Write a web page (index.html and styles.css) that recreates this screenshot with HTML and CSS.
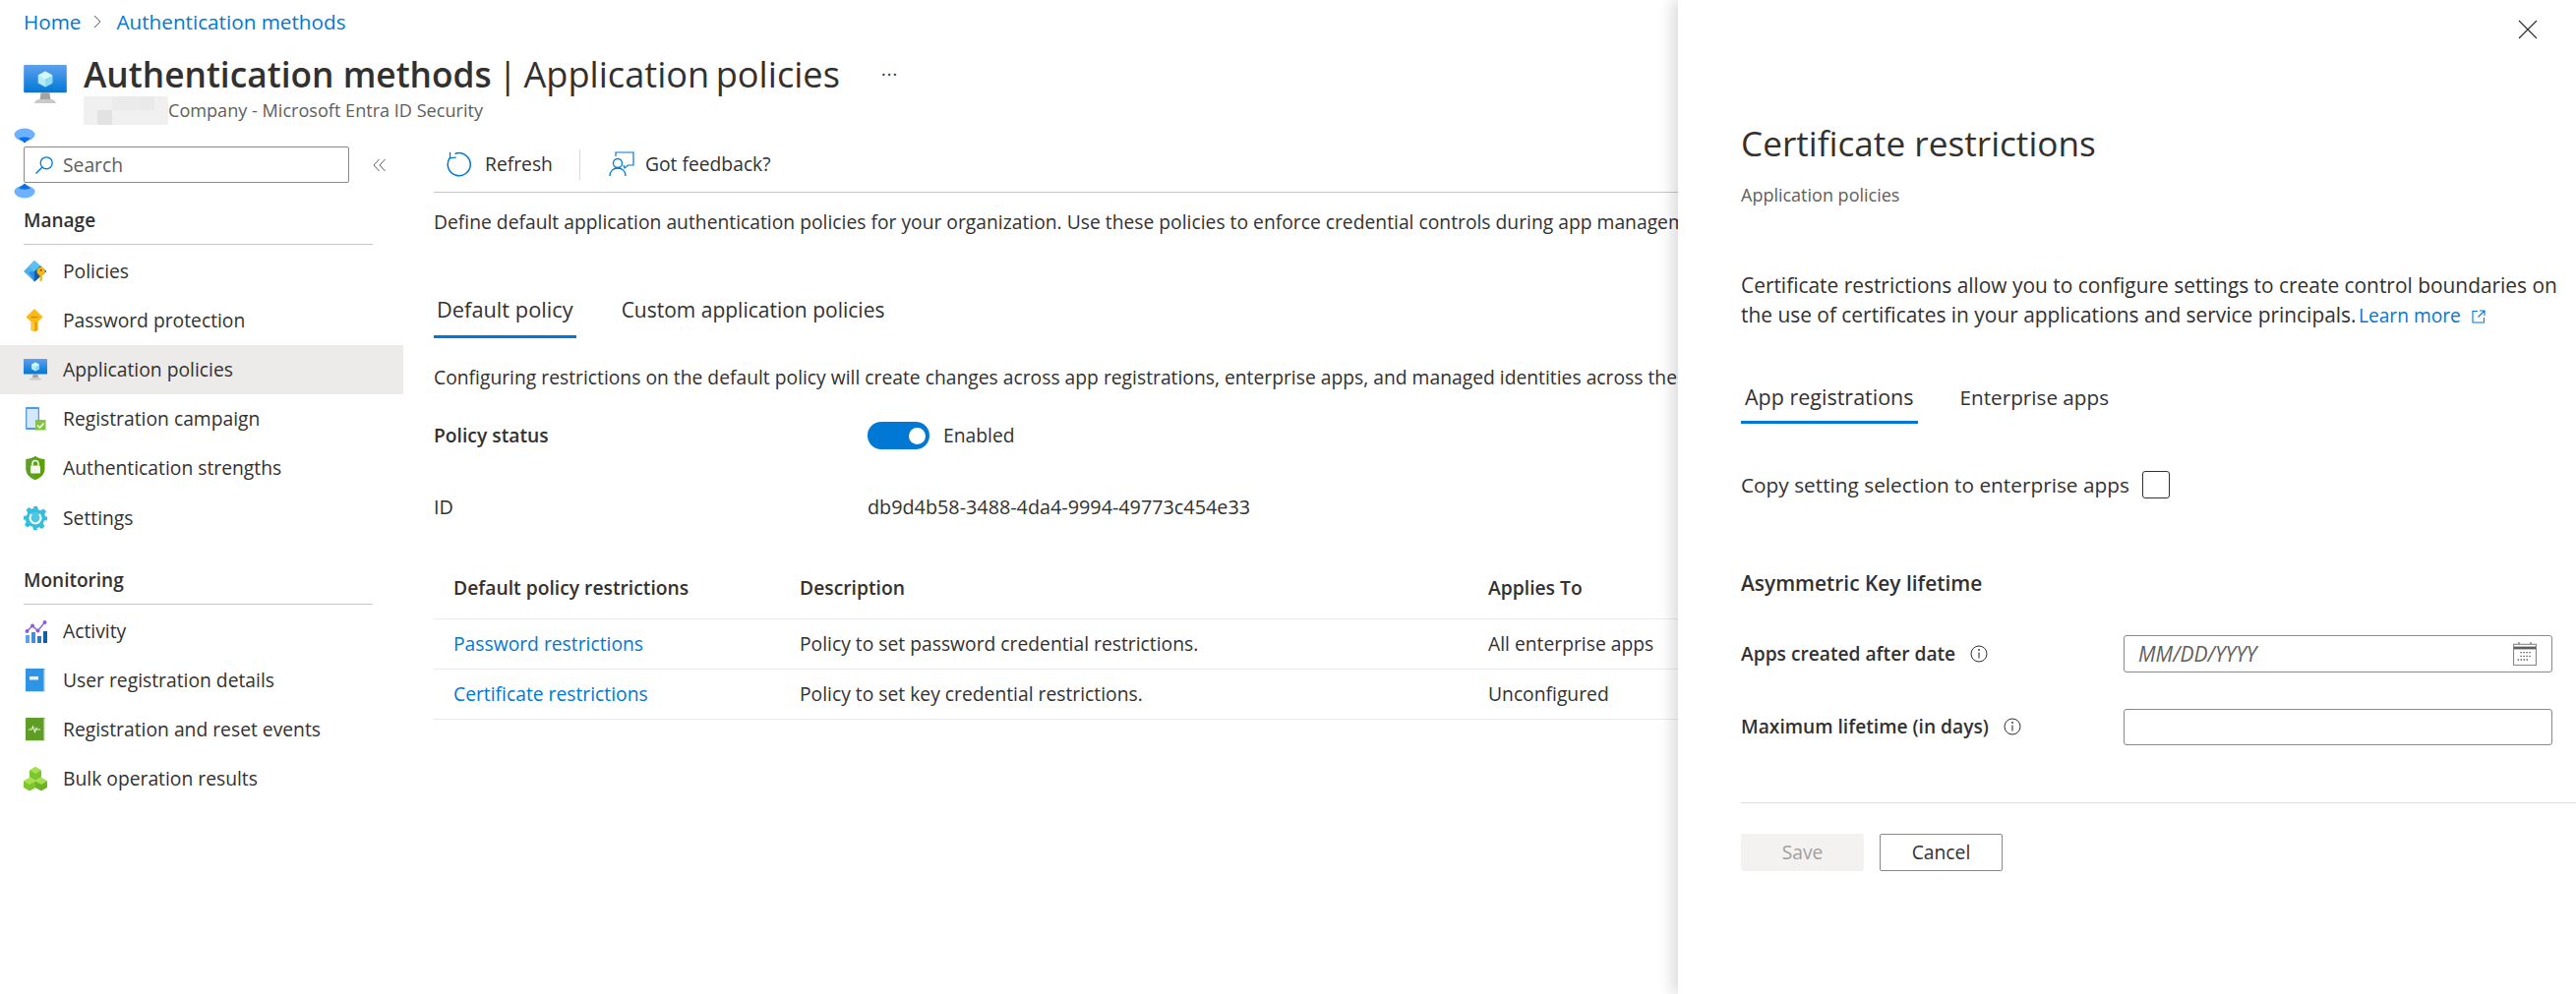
FILE: index.html
```html
<!DOCTYPE html>
<html lang="en">
<head>
<meta charset="UTF-8">
<meta name="viewport" content="width=device-width, initial-scale=1.0">
<title>Authentication methods | Application policies</title>
<link rel="stylesheet" href="styles.css">
</head>
<body>
<svg class="sprite" width="0" height="0">
    <defs>
        <linearGradient id="screenBlue" x1="0" y1="0" x2="0" y2="1">
            <stop offset="0" stop-color="#5ea0ef"/>
            <stop offset="1" stop-color="#0078d4"/>
        </linearGradient>
        <symbol id="monitor" viewBox="0 0 24 22">
            <rect x="0" y="0" width="24" height="15.6" rx="0.6" fill="url(#screenBlue)"/>
            <path d="M9.6 15.6h4.8l.6 3.6H9z" fill="#a3a3a3"/>
            <path d="M6 21.4c0-1.3 1.6-2.2 3-2.2h6c1.4 0 3 .9 3 2.2z" fill="#c9c9c9"/>
            <path d="M12 3.6l4 2.2v4.4l-4 2.2-4-2.2V5.8z" fill="#b5ecf8"/>
            <path d="M12 8l4-2.2v4.4l-4 2.2z" fill="#8fdcf2"/>
            <path d="M12 3.6l4 2.2L12 8 8 5.8z" fill="#d9f6fc"/>
        </symbol>
    </defs>
</svg>

<header class="page-head">
    <nav class="crumbs">
        <a href="#">Home</a>
        <svg class="crumb-sep" viewBox="0 0 10 16"><path d="M2 2l6 6-6 6" fill="none" stroke="#605e5c" stroke-width="1"/></svg>
        <a href="#">Authentication methods</a>
    </nav>
    <div class="title-row">
        <svg class="title-icon"><use href="#monitor"/></svg>
        <div>
            <div class="title-line">
                <h1><b>Authentication methods</b><span class="title-rest"> | Application policies</span></h1>
                <span class="more">&middot;&middot;&middot;</span>
            </div>
            <div class="subtitle">
                <div class="blur">
                    <i></i><i></i><i></i><i></i><i></i><i></i>
                    <i></i><i></i><i></i><i></i><i></i><i></i>
                </div>
                <span>Company - Microsoft Entra ID Security</span>
            </div>
        </div>
    </div>
</header>

<div class="layout">
    <aside class="sidebar">
        <div class="search-row">
            <div class="search">
                <svg class="search-icon" viewBox="0 0 20 20"><circle cx="12.200" cy="7.800" r="6" fill="none" stroke="#0078d4" stroke-width="1.300"/><path d="M8 12L1.500 18.500" stroke="#0078d4" stroke-width="1.500"/></svg>
                <span>Search</span>
            </div>
            <svg class="collapse" viewBox="0 0 14 14"><path d="M6.500 1L1 7l5.500 6M12.500 1L7 7l5.500 6" fill="none" stroke="#605e5c" stroke-width="1"/></svg>
        </div>
        <svg class="handle handle-top" viewBox="0 0 22 16"><ellipse cx="11" cy="7" rx="10.500" ry="6.500" fill="#6cb2ff"/><path d="M5 10.500C8 9 14 9 17 10.500L11 15.500z" fill="#0a6fe8"/></svg>
        <svg class="handle handle-bottom" viewBox="0 0 22 16"><ellipse cx="11" cy="9" rx="10.500" ry="6.500" fill="#6cb2ff"/><path d="M5 5.500C8 7 14 7 17 5.500L11 .5z" fill="#0a6fe8"/></svg>

        <h4 class="nav-head">Manage</h4>
        <ul class="nav">
            <li>
                <svg class="nav-icon" viewBox="0 0 24 24"><path d="M11 1L0 12l11 10.500L23.300 12z" fill="#50b0ee"/><path d="M11 1L5 7l6 5 6-5.500z" fill="#5cc0f5"/><path d="M5 12.500l6-.5 6 4-6 6.500z" fill="#2f8fe0"/><path d="M11 22.500L23.300 12 17 6.500 11 12z" fill="#1b5aa6"/><circle cx="17.700" cy="12" r="4.200" fill="#f5b716"/><path d="M16.500 15h2.400v6l-1.200 1.800-1.200-1.300z" fill="#f5b716"/><circle cx="17.700" cy="10.800" r="1.100" fill="#8a5a00"/></svg>
                <span>Policies</span>
            </li>
            <li>
                <svg class="nav-icon" viewBox="0 0 24 24"><path d="M11 .8L18.700 8.500 14 12.800V21.500Q11 23.500 8 21.500V12.800L3.300 8.500z" fill="#fdb913" stroke="#fdb913" stroke-width="1.200" stroke-linejoin="round"/><path d="M7.500 8h7v1.200h-7z" fill="#c98a00"/><path d="M11 14v9q-1.800 0-3-1.500V13z" fill="#fcc83a"/><path d="M11 14v9q1.800 0 3-1.500V13z" fill="#f59f00"/></svg>
                <span>Password protection</span>
            </li>
            <li class="active">
                <svg class="nav-icon"><use href="#monitor"/></svg>
                <span>Application policies</span>
            </li>
            <li>
                <svg class="nav-icon" viewBox="0 0 24 24"><rect x="2" y="0" width="14" height="23" rx="1.200" fill="#4f9be8"/><rect x="3.300" y="2" width="11.400" height="19" fill="#d3e9fb"/><rect x="12" y="13" width="10.500" height="10.500" fill="#86c440"/><path d="M14 18.500l2.500 2.500 4-4.500" fill="none" stroke="#fff" stroke-width="1.500"/></svg>
                <span>Registration campaign</span>
            </li>
            <li>
                <svg class="nav-icon" viewBox="0 0 24 24"><path d="M12 0c3 2 6 3 9.500 3v10c0 5-4 9-9.500 11C6.500 22 2.500 18 2.500 13V3C6 3 9 2 12 0z" fill="#57a300"/><path d="M12 0v24C6.500 22 2.500 18 2.500 13V3C6 3 9 2 12 0z" fill="#5f9e2a"/><rect x="7" y="9.500" width="10" height="8" rx="1" fill="#f2f7e9"/><path d="M9 9.500V7.500a3 3 0 0 1 6 0v2" fill="none" stroke="#f2f7e9" stroke-width="1.600"/></svg>
                <span>Authentication strengths</span>
            </li>
            <li>
                <svg class="nav-icon" viewBox="0 0 24 24"><path d="M10 0h4l.8 3.200 2.600 1 2.800-1.700 2.800 2.800-1.700 2.800 1 2.600L24 10v4l-3.200.8-1 2.600 1.700 2.800-2.800 2.800-2.800-1.700-2.600 1L14 24h-4l-.8-3.200-2.600-1-2.800 1.700L1 18.700l1.700-2.800-1-2.600L0 14v-4l3.200-.8 1-2.600L2.500 3.800l2.800-2.800L8 2.800l2.600-1z" fill="#32bedd"/><circle cx="12" cy="12" r="6.500" fill="#fff" opacity=".15"/><path d="M8 8a5.500 5.500 0 1 0 8 0" fill="none" stroke="#fff" stroke-width="2"/></svg>
                <span>Settings</span>
            </li>
        </ul>

        <h4 class="nav-head nav-head-second">Monitoring</h4>
        <ul class="nav nav-second">
            <li>
                <svg class="nav-icon" viewBox="0 0 24 24"><rect x="2" y="16" width="4" height="8" fill="#5ea0ef"/><rect x="8" y="13" width="4" height="11" fill="#3f8fdb"/><rect x="14" y="17" width="4" height="7" fill="#2a7cc9"/><rect x="20" y="12" width="4" height="12" fill="#0f5fa8"/><path d="M3.500 12L9 6.500l5.500 5L21.500 3" fill="none" stroke="#8c5be0" stroke-width="1.300"/><circle cx="3.500" cy="12" r="2" fill="#8c5be0"/><circle cx="9" cy="6.500" r="2" fill="#8c5be0"/><circle cx="14.500" cy="11.500" r="2" fill="#8c5be0"/><circle cx="21.500" cy="3" r="2" fill="#8c5be0"/></svg>
                <span>Activity</span>
            </li>
            <li>
                <svg class="nav-icon" viewBox="0 0 24 24"><rect x="2" y="0" width="20" height="24" rx=".8" fill="#2f94e5"/><path d="M20.500 0.500v22.500H2v1h20V.5z" fill="#cde4f7"/><rect x="6" y="8" width="9" height="3.500" fill="#e4f1fb"/></svg>
                <span>User registration details</span>
            </li>
            <li>
                <svg class="nav-icon" viewBox="0 0 24 24"><rect x="2" y="0" width="20" height="24" rx=".8" fill="#5e9e27"/><path d="M20.500 .5v22.500H2v1h20V.5z" fill="#d9ead0"/><path d="M5 12h3l1.500-3 2 5.500 1.500-4 1 1.500h3" fill="none" stroke="#e7f3da" stroke-width="1.100"/></svg>
                <span>Registration and reset events</span>
            </li>
            <li>
                <svg class="nav-icon" viewBox="0 0 24 24"><path d="M12 0l6 3.400v7L12 14l-6-3.600v-7z" fill="#7cc62d"/><path d="M12 0l6 3.400L12 7 6 3.400z" fill="#a5e04f"/><path d="M6 11l6 3.500v6.800L6 24.500 0 21v-6.500z" fill="#7cc62d"/><path d="M6 11l6 3.500L6 18 0 14.500z" fill="#a5e04f"/><path d="M18 11l6 3.500V21l-6 3.500-6-3.200v-6.800z" fill="#6cb423"/><path d="M18 11l6 3.500-6 3.500-6-3.500z" fill="#a5e04f"/></svg>
                <span>Bulk operation results</span>
            </li>
        </ul>
    </aside>

    <main class="main">
        <div class="toolbar">
            <button class="tool">
                <svg class="tool-icon" viewBox="0 0 26 26"><path d="M8.500 2.500A11.500 11.500 0 1 1 3.400 6.500" fill="none" stroke="#0078d4" stroke-width="1.500"/><path d="M3.500 .8l.2 6 6-.6" fill="none" stroke="#0078d4" stroke-width="1.300"/></svg>
                <span>Refresh</span>
            </button>
            <div class="tool-sep"></div>
            <button class="tool">
                <svg class="tool-icon feedback-icon" viewBox="0 0 26 26"><path d="M7 5V1h18v13h-5.500l-3.500 3-1-3" fill="none" stroke="#0078d4" stroke-width="1.200"/><circle cx="9" cy="12" r="4.500" fill="none" stroke="#0078d4" stroke-width="1.300"/><path d="M1 25c0-5 3.500-8 8-8s8 3 8 8" fill="none" stroke="#0078d4" stroke-width="1.300"/></svg>
                <span>Got feedback?</span>
            </button>
        </div>

        <p class="intro">Define default application authentication policies for your organization. Use these policies to enforce credential controls during app management.</p>

        <div class="tabs main-tabs">
            <div class="tab selected">Default policy</div>
            <div class="tab">Custom application policies</div>
        </div>

        <p class="note">Configuring restrictions on the default policy will create changes across app registrations, enterprise apps, and managed identities across the organization.</p>

        <div class="field policy-status">
            <label>Policy status</label>
            <div class="toggle-wrap">
                <div class="toggle"></div>
                <span>Enabled</span>
            </div>
        </div>
        <div class="field policy-id">
            <label>ID</label>
            <span>db9d4b58-3488-4da4-9994-49773c454e33</span>
        </div>

        <table class="restrictions">
            <thead>
                <tr>
                    <th class="col-name">Default policy restrictions</th>
                    <th class="col-desc">Description</th>
                    <th>Applies To</th>
                </tr>
            </thead>
            <tbody>
                <tr>
                    <td><a href="#">Password restrictions</a></td>
                    <td>Policy to set password credential restrictions.</td>
                    <td>All enterprise apps</td>
                </tr>
                <tr>
                    <td><a href="#">Certificate restrictions</a></td>
                    <td>Policy to set key credential restrictions.</td>
                    <td>Unconfigured</td>
                </tr>
            </tbody>
        </table>
    </main>
</div>

<section class="panel">
    <svg class="close" viewBox="0 0 20 20"><path d="M1 1l18 18M19 1L1 19" stroke="#323130" stroke-width="1.200"/></svg>
    <h2 class="panel-title">Certificate restrictions</h2>
    <div class="panel-sub">Application policies</div>
    <p class="panel-text">Certificate restrictions allow you to configure settings to create control boundaries on<br>the use of certificates in your applications and service principals. <a href="#">Learn more <svg class="ext" viewBox="0 0 14 14"><path d="M6 1.500H1v11.500h11.500V8M8 1h5v5M13 1L6.500 7.500" fill="none" stroke="#0078d4" stroke-width="1.100"/></svg></a></p>

    <div class="tabs panel-tabs">
        <div class="tab selected">App registrations</div>
        <div class="tab">Enterprise apps</div>
    </div>

    <div class="copy-row">
        <span>Copy setting selection to enterprise apps</span>
        <div class="checkbox"></div>
    </div>

    <h3 class="section-head">Asymmetric Key lifetime</h3>

    <div class="form-row first-row">
        <label>Apps created after date <svg class="info" viewBox="0 0 18 18"><circle cx="9" cy="9" r="8" fill="none" stroke="#323130" stroke-width="1"/><path d="M9 7.500V13.500" stroke="#323130" stroke-width="1.100"/><circle cx="9" cy="5" r=".9" fill="#323130"/></svg></label>
        <div class="input">
            <span class="placeholder">MM/DD/YYYY</span>
            <svg class="calendar" viewBox="0 0 26 26"><path d="M6.500 0v4M19.500 0v4" stroke="#605e5c" stroke-width="1.200"/><rect x=".6" y="2.500" width="24.800" height="23" fill="#fff" stroke="#8a8886" stroke-width="1.200"/><path d="M1 6.500h24" stroke="#605e5c" stroke-width="3"/><path d="M8 11.500h12M8 15.500h12M5 19.500h12" stroke="#605e5c" stroke-width="1.400" stroke-dasharray="1.600 1.600"/></svg>
        </div>
    </div>
    <div class="form-row second-row">
        <label>Maximum lifetime (in days) <svg class="info" viewBox="0 0 18 18"><circle cx="9" cy="9" r="8" fill="none" stroke="#323130" stroke-width="1"/><path d="M9 7.500V13.500" stroke="#323130" stroke-width="1.100"/><circle cx="9" cy="5" r=".9" fill="#323130"/></svg></label>
        <div class="input"></div>
    </div>

    <div class="panel-rule"></div>
    <div class="panel-actions">
        <button class="btn btn-save">Save</button>
        <button class="btn btn-cancel">Cancel</button>
    </div>
</section>
</body>
</html>
```

FILE: styles.css
```css
html, body {
    height: 100%;
}
body {
    margin: 0;
    overflow: hidden;
    position: relative;
    background: #fff;
    color: #323130;
    font-family: "Open Sans", "Noto Sans", Arial, sans-serif;
    font-size: 19.300px;
    line-height: 26px;
}
a {
    color: #0078d4;
    text-decoration: none;
}
p, h1, h2, h3, h4, ul {
    margin: 0;
    padding: 0;
}
.sprite {
    position: absolute;
}

/* header */
.page-head {
    padding-left: 24px;
}
.crumbs {
    display: flex;
    align-items: center;
    height: 44px;
    font-size: 20.700px;
}
.crumb-sep {
    width: 10px;
    height: 16px;
    margin: 0 14px 0 12px;
}
.title-row {
    display: flex;
    margin-top: 8px;
}
.title-icon {
    width: 44px;
    height: 40px;
    margin: 14px 17px 0 0;
}
.title-line {
    display: flex;
    align-items: center;
    height: 46px;
}
h1 {
    font-size: 35.300px;
    font-weight: 400;
    line-height: 46px;
    white-space: nowrap;
}
h1 b {
    font-weight: 600;
}
.title-rest {
    font-size: 36.200px;
    word-spacing: -3px;
}
.more {
    margin-left: 42px;
    font-size: 18px;
    letter-spacing: 1px;
    color: #323130;
}
.subtitle {
    display: flex;
    align-items: center;
    height: 28px;
    font-size: 18.100px;
    color: #605e5c;
}
.blur {
    display: grid;
    grid-template-columns: repeat(6, 1fr);
    width: 86px;
    height: 29px;
}
.blur i {
    background: #f0f0f0;
}
.blur i:nth-child(3), .blur i:nth-child(4) {
    background: #ebebeb;
}
.blur i:nth-child(5) {
    background: #e9e9e9;
}
.blur i:nth-child(8) {
    background: #e2e2e2;
}

/* sidebar */
.layout {
    display: flex;
}
.sidebar {
    position: relative;
    flex: 0 0 410px;
    padding-top: 23px;
}
.search-row {
    display: flex;
    align-items: center;
    padding-left: 24px;
}
.search {
    display: flex;
    align-items: center;
    box-sizing: border-box;
    width: 331px;
    height: 37px;
    padding-left: 10px;
    border: 1px solid #8a8886;
    border-radius: 2px;
    color: #605e5c;
}
.search-icon {
    width: 20px;
    height: 20px;
    margin-right: 9px;
}
.collapse {
    width: 14px;
    height: 14px;
    margin-left: 24px;
}
.handle {
    position: absolute;
    left: 14px;
    width: 22px;
    height: 16px;
}
.handle-top {
    top: 4px;
}
.handle-bottom {
    top: 60px;
}
.nav-head {
    box-sizing: content-box;
    width: 355px;
    margin: 26px 0 0 24px;
    padding-bottom: 12px;
    border-bottom: 1px solid #c8c6c4;
    font-size: 19px;
    line-height: 24px;
    font-weight: 600;
}
.nav {
    margin-top: 2px;
    list-style-type: none;
}
.nav li {
    display: flex;
    align-items: center;
    height: 50.100px;
    padding-left: 24px;
}
.nav li.active {
    background: #edebe9;
}
.nav-icon {
    flex: none;
    width: 24px;
    height: 24px;
    margin-right: 16px;
}

/* main */
.main {
    flex: 1;
    min-width: 0;
    padding: 0 0 0 31px;
}
.toolbar {
    display: flex;
    align-items: center;
    height: 34px;
    padding: 24px 0 11px 13px;
    border-bottom: 1px solid #c8c6c4;
}
.tool {
    display: flex;
    align-items: center;
    padding: 0;
    border: none;
    background: none;
    color: #323130;
    font: inherit;
    cursor: pointer;
}
.tool-icon {
    width: 26px;
    height: 26px;
    margin-right: 13px;
}
.feedback-icon {
    margin-right: 11px;
}
.tool-sep {
    width: 1px;
    height: 31px;
    margin: 0 29px 0 27px;
    background: #dadada;
}
.intro {
    margin-top: 17px;
    white-space: nowrap;
}
.tabs {
    display: flex;
}
.tab {
    box-sizing: border-box;
    padding: 0 3px 13px;
    border-bottom: 3px solid transparent;
    white-space: nowrap;
}
.tab.selected {
    border-bottom-color: #0078d4;
    font-weight: 500;
}
.main-tabs {
    margin-top: 63px;
    gap: 43px;
    font-size: 21px;
}
.main-tabs .selected {
    font-size: 21.800px;
}
.note {
    margin-top: 27px;
    white-space: nowrap;
}
.field {
    display: flex;
    align-items: center;
}
.field label {
    flex: 0 0 441px;
}
.policy-status {
    height: 28px;
    margin-top: 32px;
}
.policy-status label {
    font-weight: 600;
}
.policy-id {
    margin-top: 46px;
    font-size: 19.800px;
}
.toggle-wrap {
    display: flex;
    align-items: center;
    gap: 14px;
}
.toggle {
    position: relative;
    width: 63px;
    height: 28px;
    border-radius: 14px;
    background: #0078d4;
}
.toggle::after {
    content: "";
    position: absolute;
    top: 6px;
    right: 4px;
    width: 17px;
    height: 17px;
    border-radius: 50%;
    background: #fff;
}
.restrictions {
    width: 100%;
    margin-top: 50px;
    border-collapse: collapse;
    table-layout: fixed;
}
.restrictions th {
    height: 37px;
    padding: 0 0 13px 20px;
    text-align: left;
    font-weight: 600;
}
.restrictions td {
    height: 50px;
    padding: 0 0 0 20px;
    border-top: 1px solid #edebe9;
    border-bottom: 1px solid #edebe9;
    white-space: nowrap;
}
.col-name {
    width: 332px;
}
.col-desc {
    width: 680px;
}

/* side panel */
.panel {
    position: absolute;
    top: 0;
    right: 0;
    bottom: 0;
    box-sizing: border-box;
    width: 913px;
    padding: 121px 23px 0 64px;
    background: #fff;
    box-shadow: -6px 0 14px rgba(0,0,0,0.14);
    font-size: 21px;
}
.close {
    position: absolute;
    top: 20px;
    right: 39px;
    width: 20px;
    height: 20px;
}
.panel-title {
    font-size: 35.200px;
    font-weight: 400;
    line-height: 48px;
}
.panel-sub {
    margin-top: 16px;
    font-size: 18px;
    color: #605e5c;
}
.panel-text {
    margin-top: 64px;
    font-size: 20.900px;
    line-height: 30px;
    white-space: nowrap;
}
.panel-text a {
    margin-left: -3px;
    font-size: 19.200px;
}
.ext {
    width: 14px;
    height: 14px;
    margin-left: 6px;
    vertical-align: -1px;
}
.panel-tabs {
    margin-top: 55px;
    gap: 39px;
    font-size: 20.700px;
}
.panel-tabs .tab {
    padding: 0 4px 11px;
    height: 40px;
}
.panel-tabs .selected {
    font-size: 21.500px;
}
.copy-row {
    display: flex;
    align-items: center;
    height: 28px;
    margin-top: 48px;
    font-size: 20.800px;
}
.checkbox {
    box-sizing: border-box;
    width: 28px;
    height: 28px;
    margin-left: 13px;
    border: 1px solid #323130;
    border-radius: 3px;
}
.section-head {
    margin-top: 73px;
    font-size: 20.900px;
    font-weight: 600;
}
.form-row {
    display: flex;
    align-items: center;
}
.form-row label {
    display: flex;
    align-items: center;
    flex: 0 0 389px;
    font-size: 19.200px;
    font-weight: 600;
}
.info {
    width: 18px;
    height: 18px;
    margin-left: 15px;
}
.first-row {
    margin-top: 40px;
}
.second-row {
    margin-top: 37px;
}
.input {
    display: flex;
    align-items: center;
    justify-content: space-between;
    box-sizing: border-box;
    width: 436px;
    height: 37.500px;
    padding: 0 14px;
    border: 1px solid #8a8886;
    border-radius: 3px;
}
.placeholder {
    font-style: italic;
    color: #605e5c;
}
.calendar {
    width: 26px;
    height: 24px;
}
.panel-rule {
    height: 1px;
    margin: 58px -23px 0 0;
    background: #dfdfdf;
}
.panel-actions {
    display: flex;
    gap: 16px;
    margin-top: 31px;
}
.btn {
    box-sizing: border-box;
    width: 125px;
    height: 38px;
    border-radius: 2px;
    font: inherit;
    font-size: 19.300px;
}
.btn-save {
    border: none;
    background: #f3f2f1;
    color: #a19f9d;
}
.btn-cancel {
    border: 1px solid #8a8886;
    background: #fff;
    color: #323130;
}
```
